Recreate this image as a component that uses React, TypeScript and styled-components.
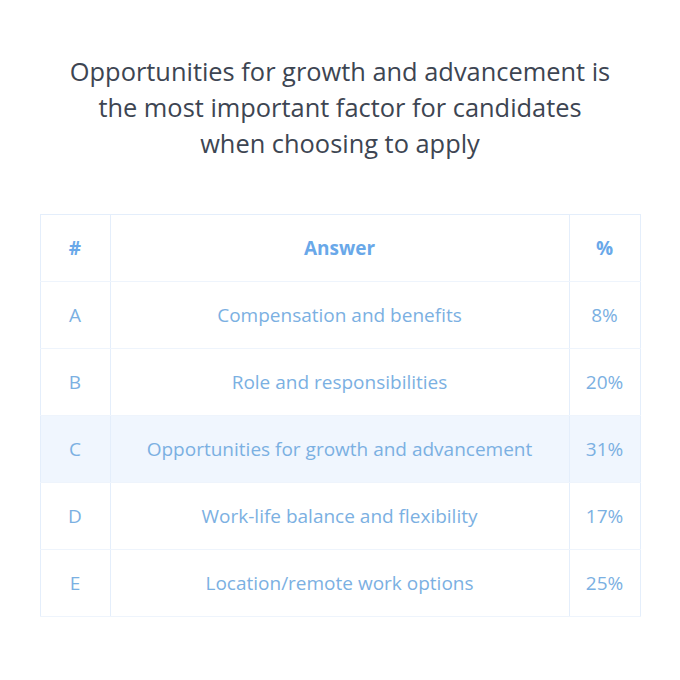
import React from 'react';
import styled, { createGlobalStyle } from 'styled-components';

const GlobalStyle = createGlobalStyle`
  html, body {
    margin: 0;
    padding: 0;
    background: #ffffff;
  }
  body {
    font-family: 'Open Sans', 'Liberation Sans', sans-serif;
  }
`;

const rows = [
  { key: 'A', answer: 'Compensation and benefits', pct: '8%' },
  { key: 'B', answer: 'Role and responsibilities', pct: '20%' },
  { key: 'C', answer: 'Opportunities for growth and advancement', pct: '31%', highlight: true },
  { key: 'D', answer: 'Work-life balance and flexibility', pct: '17%' },
  { key: 'E', answer: 'Location/remote work options', pct: '25%' },
];

const App: React.FC = () => {
  return (
    <>
      <GlobalStyle />
      <StyledPage>
        <StyledTitle>
          Opportunities for growth and advancement is
          <br />
          the most important factor for candidates
          <br />
          when choosing to apply
        </StyledTitle>
        <StyledTable>
          <colgroup>
            <col style={{ width: 70 }} />
            <col />
            <col style={{ width: 71 }} />
          </colgroup>
          <thead>
            <tr>
              <HeadCell>#</HeadCell>
              <HeadCell>Answer</HeadCell>
              <HeadCell>%</HeadCell>
            </tr>
          </thead>
          <tbody>
            {rows.map((row) => (
              <BodyRow key={row.key} $highlight={row.highlight}>
                <Cell>{row.key}</Cell>
                <Cell>{row.answer}</Cell>
                <Cell>{row.pct}</Cell>
              </BodyRow>
            ))}
          </tbody>
        </StyledTable>
      </StyledPage>
    </>
  );
};

const StyledPage = styled.div`
  width: 680px;
  height: 680px;
  display: flex;
  flex-direction: column;
  align-items: center;
  padding-top: 53px;
  box-sizing: border-box;
`;

const StyledTitle = styled.h1`
  margin: 0 0 53px;
  font-size: 25.4px;
  font-weight: 400;
  line-height: 36px;
  color: #3d4552;
  text-align: center;
`;

const StyledTable = styled.table`
  width: 601px;
  border-collapse: collapse;
  border: 1.5px solid #e4eefb;
  table-layout: fixed;
`;

const HeadCell = styled.th`
  height: 66px;
  padding: 0;
  font-size: 19px;
  font-weight: 700;
  color: #69a8e9;
  text-align: center;
  border-left: 1.5px solid #e4eefb;
  border-bottom: 1px solid #eef4fc;
`;

const BodyRow = styled.tr<{ $highlight?: boolean }>`
  background: ${(p) => (p.$highlight ? '#f0f6fe' : 'transparent')};
`;

const Cell = styled.td`
  height: 66px;
  padding: 0;
  font-size: 19px;
  font-weight: 400;
  color: #7bb0e2;
  text-align: center;
  border-left: 1.5px solid #e4eefb;
  border-bottom: 1px solid #eef4fc;
`;

export default App;
